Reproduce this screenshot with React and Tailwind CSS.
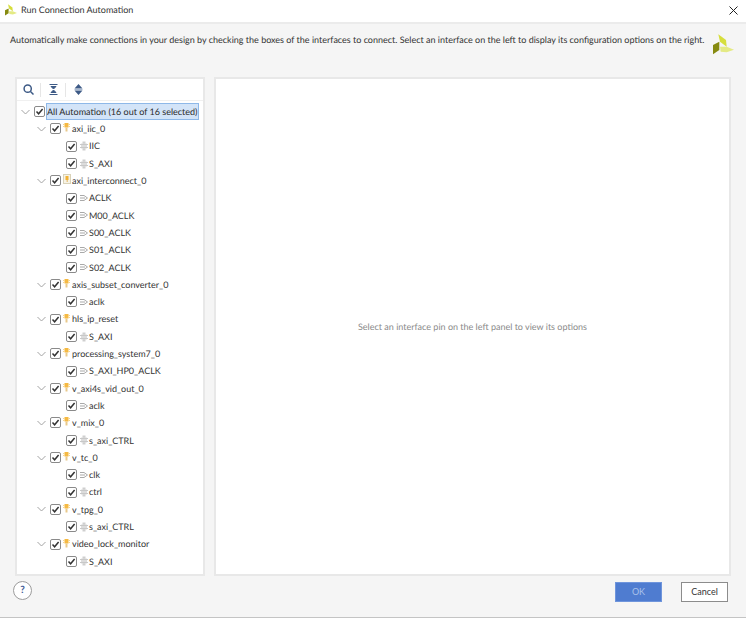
import React from "react";

const tree = [
  { n: "axi_iic_0", c: [["IIC", "b"], ["S_AXI", "b"]] },
  { n: "axi_interconnect_0", box: true, c: [["ACLK", "k"], ["M00_ACLK", "k"], ["S00_ACLK", "k"], ["S01_ACLK", "k"], ["S02_ACLK", "k"]] },
  { n: "axis_subset_converter_0", c: [["aclk", "k"]] },
  { n: "hls_ip_reset", c: [["S_AXI", "b"]] },
  { n: "processing_system7_0", c: [["S_AXI_HP0_ACLK", "k"]] },
  { n: "v_axi4s_vid_out_0", c: [["aclk", "k"]] },
  { n: "v_mix_0", c: [["s_axi_CTRL", "b"]] },
  { n: "v_tc_0", c: [["clk", "k"], ["ctrl", "b"]] },
  { n: "v_tpg_0", c: [["s_axi_CTRL", "b"]] },
  { n: "video_lock_monitor", c: [["S_AXI", "b"]] },
];

const Chevron = () => (
  <svg width="9" height="6" viewBox="0 0 9 6" fill="none" stroke="#a3a3a3" strokeWidth="1" className="shrink-0">
    <path d="M0.5 1 L4.5 5 L8.5 1" />
  </svg>
);

const Check = () => (
  <span className="w-[11px] h-[11px] shrink-0 rounded-[2px] border border-[#8a8a8a] bg-white flex items-center justify-center">
    <svg width="9" height="9" viewBox="0 0 9 9" fill="none" stroke="#333" strokeWidth="1.5">
      <path d="M1.5 4.5 L3.6 6.8 L7.6 2" />
    </svg>
  </span>
);

const Bulb = () => (
  <svg width="7" height="10" viewBox="0 0 7 10" className="shrink-0 -mt-[3px]">
    <path d="M1.5 1 H5.5 V5.5 H1.5 Z" fill="#f5b942" />
    <path d="M0 2.5 H1.5 M5.5 2.5 H7 M0 4.5 H1.5 M5.5 4.5 H7" stroke="#f8d58a" strokeWidth="1" />
    <path d="M2.5 5.5 H4.5 V9.5 H2.5 Z" fill="#e9c98a" />
  </svg>
);

const BoxBulb = () => (
  <svg width="8" height="10" viewBox="0 0 8 10" className="shrink-0 -mt-[3px]">
    <rect x="0.5" y="0.5" width="7" height="9" fill="#f7f3e6" stroke="#d9d2b8" />
    <rect x="2.5" y="2" width="3" height="4" fill="#f2b233" />
    <rect x="3.5" y="6" width="1.5" height="2" fill="#e9c98a" />
  </svg>
);

const BusPin = () => (
  <svg width="8" height="10" viewBox="0 0 8 10" className="shrink-0">
    <path d="M2.5 0.5 H5.5 V9.5 H2.5 Z" fill="#cfcfcf" />
    <path d="M1 2.5 H7 V7.5 H1 Z" fill="#dcdcdc" />
    <path d="M0 3.5 H8 M0 6.5 H8" stroke="#c8c8c8" strokeWidth="1" />
  </svg>
);

const ClkPin = () => (
  <svg width="8" height="6" viewBox="0 0 8 6" fill="none" stroke="#a9a9a9" strokeWidth="1" className="shrink-0">
    <path d="M0 0.5 H4 L7.5 3 L4 5.5 H0" />
    <path d="M0 3 H5" />
  </svg>
);

const Logo = ({ size, className }) => (
  <svg width={size} height={size} viewBox="0 0 21 21" className={className}>
    <path d="M5.3 0.3 L13 6 L13.7 12.7 L7 7.7 Z" fill="#d6de3c" />
    <path d="M7 12.7 L13.7 12.7 L21 15.7 L13.7 18.3 L7.7 17.7 Z" fill="#e4ea84" />
    <path d="M0 11 L6.3 7.7 L6.3 16 L0 20.3 Z" fill="#868a10" />
  </svg>
);

const Row = ({ indent, chevron, children }) => (
  <div className="h-[17.3px] flex items-center" style={{ paddingLeft: indent }}>
    {chevron && <span className="w-[13px] flex items-center"><Chevron /></span>}
    {children}
  </div>
);

export default function App() {
  return (
    <div
      className="w-[746px] h-[618px] bg-[#f5f5f5] flex flex-col overflow-hidden text-[#333] [text-rendering:geometricPrecision]"
      style={{ fontFamily: 'Lato, "Open Sans", sans-serif' }}
    >
      <div className="h-[24px] shrink-0 bg-white border-b-2 border-[#ebebeb] flex items-center pb-[2px] pl-[5px] pr-[8px]">
        <Logo size={12} />
        <span className="ml-[4px] text-[9px] text-[#333]">Run Connection Automation</span>
        <svg width="9" height="9" viewBox="0 0 9 9" className="ml-auto" stroke="#222" strokeWidth="1">
          <path d="M0.5 0.5 L8.5 8.5 M8.5 0.5 L0.5 8.5" />
        </svg>
      </div>

      <div className="h-[53px] shrink-0 flex pl-[10px] pr-[12px] pt-[9px] justify-between">
        <span className="text-[9px] leading-[14px] whitespace-nowrap">
          Automatically make connections in your design by checking the boxes of the interfaces to connect. Select an interface on the left to display its configuration options on the right.
        </span>
        <Logo size={21} className="mt-px" />
      </div>

      <div className="h-[499px] shrink-0 flex pl-[15px] pr-[15px] gap-[9px]">
        <div className="w-[190px] border-[2px] border-[#e8e8e8] bg-white flex flex-col">
          <div className="h-[22px] shrink-0 flex items-center border-b border-[#f0f0f0]">
            <span className="w-[24px] flex justify-center border-r border-[#e6e6e6] h-[14px] items-center">
              <svg width="11" height="11" viewBox="0 0 11 11" fill="none" stroke="#3d5a86" strokeWidth="1.5">
                <circle cx="4.7" cy="4.7" r="3.6" />
                <path d="M7.5 7.5 L10.5 10.5" />
              </svg>
            </span>
            <span className="w-[25px] flex justify-center border-r border-[#e6e6e6] h-[14px] items-center">
              <svg width="9" height="11" viewBox="0 0 9 11" fill="#3d5a86" stroke="#3d5a86" strokeWidth="1">
                <path d="M0.5 0.5 H8.5 M0.5 10.5 H8.5" fill="none" />
                <path d="M2 2.5 H7 L4.5 5 Z M2 8.5 H7 L4.5 6 Z" />
              </svg>
            </span>
            <span className="w-[25px] flex justify-center">
              <svg width="9" height="11" viewBox="0 0 9 11" fill="#3d5a86" stroke="none">
                <path d="M4.5 0 L8.5 4.5 H0.5 Z M4.5 11 L8.5 6.5 H0.5 Z" />
                <path d="M0.5 5.5 H8.5" stroke="#a8b8d0" strokeWidth="1" />
              </svg>
            </span>
          </div>
          <div className="flex-1 pt-[2px] text-[9px] whitespace-nowrap">
            <Row indent={4} chevron>
              <Check />
              <span className="ml-[1px] h-[17px] flex items-center bg-[#d3e4f8] border border-[#8eb8e8] pr-px text-[#2a2a2a]">
                All Automation (16 out of 16 selected)
              </span>
            </Row>
            {tree.map((g) => (
              <React.Fragment key={g.n}>
                <Row indent={20} chevron>
                  <Check />
                  <span className="ml-[2px] w-[8px] flex">{g.box ? <BoxBulb /> : <Bulb />}</span>
                  <span className="ml-[1px]">{g.n}</span>
                </Row>
                {g.c.map(([t, kind], i) => (
                  <Row key={g.n + i} indent={49}>
                    <Check />
                    <span className="ml-[3px] w-[9px] flex">{kind === "b" ? <BusPin /> : <ClkPin />}</span>
                    <span>{t}</span>
                  </Row>
                ))}
              </React.Fragment>
            ))}
          </div>
        </div>
        <div className="flex-1 border-[2px] border-[#e8e8e8] bg-white flex items-center justify-center">
          <span className="text-[9px] text-[#8a8a8a]">Select an interface pin on the left panel to view its options</span>
        </div>
      </div>

      <div className="flex-1 flex items-start pt-[5px] pl-[13px] pr-[18px] border-b border-[#c4c4c4]">
        <span className="w-[19px] h-[19px] rounded-full border border-[#9c9c9c] bg-white flex items-center justify-center text-[10px] font-bold text-[#3d5a96]">?</span>
        <button className="ml-auto mt-px w-[47px] h-[20px] bg-[#4f7cd0] text-[#a9c1ea] text-[9px] flex items-center justify-center border border-[#6f95dc]">OK</button>
        <button className="ml-[19px] mt-px w-[47px] h-[20px] bg-white text-[#333] text-[9px] flex items-center justify-center border border-[#8c8c8c]">Cancel</button>
      </div>
    </div>
  );
}
